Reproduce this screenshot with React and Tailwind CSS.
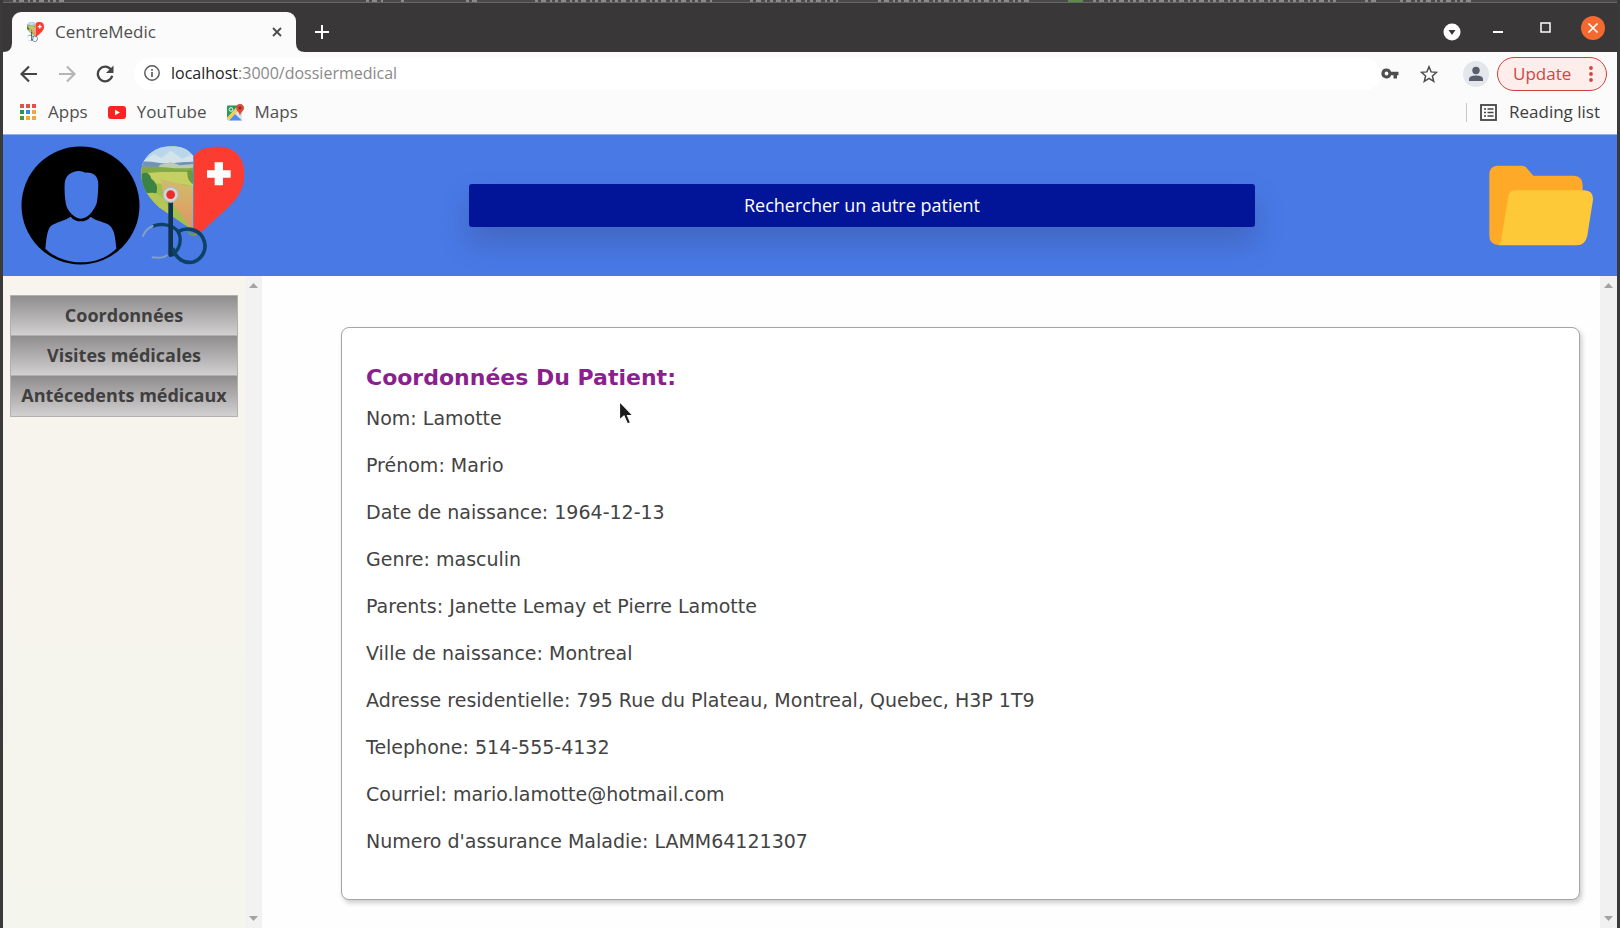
import React from "react";

const FIELDS = [
  ["Nom", "Lamotte"],
  ["Prénom", "Mario"],
  ["Date de naissance", "1964-12-13"],
  ["Genre", "masculin"],
  ["Parents", "Janette Lemay et Pierre Lamotte"],
  ["Ville de naissance", "Montreal"],
  ["Adresse residentielle", "795 Rue du Plateau, Montreal, Quebec, H3P 1T9"],
  ["Telephone", "514-555-4132"],
  ["Courriel", "mario.lamotte@hotmail.com"],
  ["Numero d'assurance Maladie", "LAMM64121307"],
];

const MENU = ["Coordonnées", "Visites médicales", "Antécedents médicaux"];

function Logo({ className, id }) {
  return (
    <svg className={className} viewBox="423 48 315 357" aria-hidden="true">
      <defs>
        <clipPath id={id}>
          <path d="M580 78C562 54 538 48 510 49C460 50 424 84 423 130C424 176 448 206 480 234L580 302Z" />
        </clipPath>
        <linearGradient id={id + "-path"} x1="0" y1="0" x2="0" y2="1">
          <stop offset="0" stopColor="#cdbd6c" />
          <stop offset="0.5" stopColor="#dca765" />
          <stop offset="1" stopColor="#d3946c" />
        </linearGradient>
      </defs>
      <g clipPath={`url(#${id})`}>
        <rect x="420" y="45" width="165" height="265" fill="#a3bf4c" />
        <rect x="420" y="45" width="165" height="62" fill="#b9d6ea" />
        <path d="M425 96L462 72L484 84L512 62L546 86L585 70V108H425Z" fill="#d3e3ea" />
        <path d="M425 96C450 90 480 104 520 100C545 94 565 98 585 94V110H425Z" fill="#6f93bd" />
        <path d="M480 104L512 96L540 106L585 102V122H470Z" fill="#bccbb4" />
        <path d="M425 112C480 104 530 122 585 112V140H425Z" fill="#83a947" />
        <path d="M425 132C480 120 540 130 585 124V172C530 150 480 166 425 158Z" fill="#c6d062" />
        <path d="M425 132Q446 120 454 146Q476 160 470 188Q445 200 425 176Z" fill="#3a8345" />
        <path d="M562 122Q585 116 585 150V164Q560 158 562 122Z" fill="#6c9a40" />
        <path d="M470 146C496 150 478 170 490 184L585 310V172C550 166 515 152 470 146Z" fill={`url(#${id}-path)`} />
        <path d="M440 190C480 180 500 215 520 262L480 240Z" fill="#b4c655" />
      </g>
      <path d="M582 78C596 55 625 50 656 50C706 50 734 84 733 134C733 180 708 210 680 236L604 306L582 312Z" fill="#fd3c31" />
      <path d="M644 97H669V121H692V143H669V166H644V143H621V121H644Z" fill="#fff" />
      <g fill="none" stroke="#0e4167" strokeLinecap="round">
        <path d="M460 288C480 280 505 284 520 292C550 310 545 350 520 374" strokeWidth="10" />
        <path d="M512 214V374" stroke="#10344f" strokeWidth="14" />
        <path d="M536 304C556 292 592 294 608 322C624 350 612 384 580 396C552 402 528 386 520 358" strokeWidth="11" />
        <path d="M458 288Q436 298 429 318M500 376Q490 386 458 382" stroke="#7fa3c0" strokeWidth="6" />
        <path d="M568 309Q576 318 588 314" stroke="#6f9a54" strokeWidth="7" />
      </g>
      <circle cx="512" cy="194" r="23" fill="#d4d6d4" stroke="#b3b9b4" strokeWidth="4" />
      <circle cx="512" cy="194" r="13" fill="#ee2b2b" />
    </svg>
  );
}

function Avatar() {
  return (
    <svg className="size-[119px] shrink-0" viewBox="63 48 357 357" aria-hidden="true">
      <circle cx="241.500" cy="226.500" r="177" fill="#000" />
      <path d="M194 160C196 136 214 124 236 123C244 123 250 126 256 128C280 126 295 140 295 162C294 182 294 200 290 220C280 246 262 266 242 266C222 264 204 244 198 224C194 202 193 180 194 160Z" fill="#4879e5" />
      <path d="M136 356C140 318 142 292 158 284C178 274 198 270 212 260C220 270 230 274 242 274C254 274 264 270 272 260C286 272 308 274 326 284C344 296 346 324 349 356C320 384 282 398 241 397C200 397 160 380 136 356Z" fill="#4879e5" />
    </svg>
  );
}

function Folder() {
  return (
    <svg className="h-[81px] w-[104px] shrink-0" viewBox="927 106 312 243" aria-hidden="true">
      <path d="M951 108H1026Q1033 108 1038 113L1060 138H1182Q1208 140 1208 166V190L1150 346H955Q928 344 928 318V132Q930 110 951 108Z" fill="#ffa928" />
      <path d="M1004 182H1214Q1240 184 1239 210L1222 318Q1216 346 1190 347H956Q964 340 965 322L985 200Q988 183 1004 182Z" fill="#fec938" />
    </svg>
  );
}

function Scrollbar({ className }) {
  return (
    <div className={`flex w-[17px] shrink-0 flex-col items-center justify-between py-[7px] ${className}`} aria-hidden="true">
      <svg className="h-[5px] w-[9px]" viewBox="0 0 9 5"><path d="M0 5L4.500 0L9 5Z" fill="#a3a3a3" /></svg>
      <svg className="h-[5px] w-[9px]" viewBox="0 0 9 5"><path d="M0 0L4.500 5L9 0Z" fill="#a3a3a3" /></svg>
    </div>
  );
}

function BackWindowEdge() {
  return (
    <div className="h-[2px] overflow-hidden bg-[#4a4a4a]" aria-hidden="true">
      <svg className="h-[2px] w-[1480px]" viewBox="0 0 1480 2">
        <path d="M10 1H65M363 1H380M398 1H404M463 1H475M532 1H710M747 1H835M875 1H1027M1090 1H1335M1362 1H1377M1397 1H1472" stroke="#8a8a8a" strokeWidth="2" strokeDasharray="3 3 5 4 2 3" />
        <path d="M1065 1H1080" stroke="#5f8a4c" strokeWidth="2" />
      </svg>
    </div>
  );
}

function AppsIcon() {
  const colors = ["#e0524a", "#e0524a", "#e0524a", "#2f8f5b", "#3f83e8", "#efa93a", "#4f9440", "#efa93a", "#efa93a"];
  return (
    <svg className="size-4" viewBox="0 0 16 16" aria-hidden="true">
      {colors.map((c, i) => (
        <rect key={i} x={(i % 3) * 6} y={Math.floor(i / 3) * 6} width="4" height="4" fill={c} />
      ))}
    </svg>
  );
}

function TitleBar() {
  return (
    <div className="flex h-[49px] items-end bg-[#3a3738] pl-[9px]">
      <div className="relative flex h-10 w-[284px] items-center rounded-t-[9px] bg-[#fbfbfb] pr-[11px] pl-[14px]">
        <svg className="absolute bottom-0 -left-[9px] size-[9px]" viewBox="0 0 9 9" aria-hidden="true"><path d="M9 0V9H0Q9 9 9 0Z" fill="#fbfbfb" /></svg>
        <svg className="absolute -right-[9px] bottom-0 size-[9px]" viewBox="0 0 9 9" aria-hidden="true"><path d="M0 0V9H9Q0 9 0 0Z" fill="#fbfbfb" /></svg>
        <Logo className="h-5 w-[19px]" id="tab-logo" />
        <span className="ml-[10px] flex-1 text-[17px] text-[#4f4f4f]">CentreMedic</span>
        <button type="button" aria-label="Fermer l'onglet" className="flex size-4 items-center justify-center">
          <svg className="size-[10px]" viewBox="0 0 10 10"><path d="M1 1L9 9M9 1L1 9" stroke="#4a4a4a" strokeWidth="1.800" /></svg>
        </button>
      </div>
      <button type="button" aria-label="Nouvel onglet" className="ml-[18px] flex h-10 w-4 items-center justify-center">
        <svg className="size-[14px]" viewBox="0 0 14 14"><path d="M7 0V14M0 7H14" stroke="#fff" strokeWidth="2" /></svg>
      </button>
      <div className="ml-auto flex h-[49px] items-center pr-3">
        <button type="button" aria-label="Rechercher dans les onglets" className="mt-2">
          <svg className="size-[18px]" viewBox="0 0 18 18"><circle cx="9" cy="9" r="8.500" fill="#fff" /><path d="M5.500 7H12.500L9 12Z" fill="#3a3738" /></svg>
        </button>
        <button type="button" aria-label="Réduire" className="ml-[32px] mt-2">
          <svg className="h-[2px] w-[10px]" viewBox="0 0 10 2"><path d="M0 1H10" stroke="#fff" strokeWidth="2" /></svg>
        </button>
        <button type="button" aria-label="Agrandir" className="ml-[37px]">
          <svg className="size-[11px]" viewBox="0 0 11 11"><rect x="1" y="1" width="9" height="9" fill="none" stroke="#fff" strokeWidth="1.500" /></svg>
        </button>
        <button type="button" aria-label="Fermer" className="ml-[30px]">
          <svg className="size-6" viewBox="0 0 24 24"><circle cx="12" cy="12" r="12" fill="#f4692f" /><path d="M7.500 7.500L16.500 16.500M16.500 7.500L7.500 16.500" stroke="#fff" strokeWidth="1.700" /></svg>
        </button>
      </div>
    </div>
  );
}

function Toolbar() {
  return (
    <div className="flex h-[43px] items-center bg-[#fbfbfb] pr-[10px] pl-[17px]">
      <button type="button" aria-label="Précédent">
        <svg className="size-[18px]" viewBox="0 0 18 18"><path d="M17 9H2M9 1.500L1.500 9L9 16.500" fill="none" stroke="#444" strokeWidth="2.200" /></svg>
      </button>
      <button type="button" aria-label="Suivant" className="ml-5">
        <svg className="size-[18px]" viewBox="0 0 18 18"><path d="M1 9H16M9 1.500L16.500 9L9 16.500" fill="none" stroke="#b5b5b5" strokeWidth="2.200" /></svg>
      </button>
      <button type="button" aria-label="Actualiser" className="ml-5">
        <svg className="size-[18px]" viewBox="0 0 18 18"><path d="M15 4.600A7.300 7.300 0 1 0 16.200 10.800" fill="none" stroke="#444" strokeWidth="2.300" /><path d="M17.500 0.500V8H10Z" fill="#444" /></svg>
      </button>
      <div className="ml-5 flex h-8 flex-1 items-center rounded-full bg-white pb-px pl-[10px]">
        <svg className="size-4" viewBox="0 0 16 16" aria-hidden="true"><circle cx="8" cy="8" r="7.200" fill="none" stroke="#5c5c5c" strokeWidth="1.500" /><path d="M8 7V12M8 4V5.700" stroke="#5c5c5c" strokeWidth="1.700" /></svg>
        <a href="#dossiermedical" className="ml-[11px] text-base text-[#898989]">
          <span className="text-[#222]">localhost</span>:3000/dossiermedical
        </a>
      </div>
      <button type="button" aria-label="Mots de passe" className="mr-[21px]">
        <svg className="h-[11px] w-[18px]" viewBox="0 0 18 11"><path d="M5.500 0.500A5 5 0 1 0 10.100 7.300H12.500V10.500H16V7.300H17.500V3.700H10.100A5 5 0 0 0 5.500 0.500ZM5.500 3.600A1.900 1.900 0 1 1 5.500 7.400A1.900 1.900 0 0 1 5.500 3.600Z" fill="#4d4d4d" fillRule="evenodd" /></svg>
      </button>
      <button type="button" aria-label="Ajouter aux favoris" className="mr-[25px]">
        <svg className="size-[18px]" viewBox="0 0 18 18"><path d="M9 1.800L11.100 6.900L16.600 7.300L12.400 10.900L13.700 16.300L9 13.400L4.300 16.300L5.600 10.900L1.400 7.300L6.900 6.900Z" fill="none" stroke="#4d4d4d" strokeWidth="1.500" /></svg>
      </button>
      <button type="button" aria-label="Profil">
        <svg className="size-[26px]" viewBox="0 0 26 26"><circle cx="13" cy="13" r="13" fill="#e3e6eb" /><circle cx="13" cy="9.500" r="3.700" fill="#585e6e" /><path d="M6 20V18Q6 14.500 13 14.500Q20 14.500 20 18V20Z" fill="#585e6e" /></svg>
      </button>
      <button type="button" className="ml-2 flex h-[34px] w-[110px] items-center rounded-full border border-[#d2403b] bg-[#fdedeb] pr-[13px] pl-[15px] text-[17px] text-[#cf4743]">
        Update
        <svg className="ml-auto h-4 w-1" viewBox="0 0 4 16" aria-hidden="true"><circle cx="2" cy="2" r="1.900" fill="#cf4743" /><circle cx="2" cy="8" r="1.900" fill="#cf4743" /><circle cx="2" cy="14" r="1.900" fill="#cf4743" /></svg>
      </button>
    </div>
  );
}

function Bookmarks() {
  return (
    <div className="flex h-10 items-center border-b border-[#8fb0f5] bg-[#fbfbfb] pr-[17px] pb-[5px] pl-[17px] text-[17px] text-[#4f4f4f]">
      <a href="#apps" className="flex items-center gap-3"><AppsIcon />Apps</a>
      <a href="#youtube" className="ml-5 flex items-center gap-[11px]">
        <svg className="h-[13px] w-[18px]" viewBox="0 0 18 13" aria-hidden="true"><rect width="18" height="13" rx="3" fill="#fb2320" /><path d="M7 3.700L12 6.500L7 9.300Z" fill="#fff" /></svg>
        YouTube
      </a>
      <a href="#maps" className="ml-5 flex items-center gap-[11px]">
        <svg className="size-[17px]" viewBox="0 0 17 17" aria-hidden="true">
          <rect y="1.500" width="15" height="15" rx="1" fill="#dfe3e6" />
          <path d="M0 2.500Q0 1.500 1 1.500H11L0 14Z" fill="#2f9a57" />
          <path d="M0 14L11 2.500L13 5L1 16.500Z" fill="#f6cd43" />
          <path d="M2 16.500L8 10L15 16.500Z" fill="#4f8df0" />
          <circle cx="4" cy="5.500" r="1.800" fill="none" stroke="#fff" strokeWidth="0.900" />
          <path d="M13 0A3.900 3.900 0 0 0 9.200 4C9.200 7 12.500 8 13 12C13.500 8 17 7 17 4A3.900 3.900 0 0 0 13 0Z" fill="#dc4a3c" />
          <circle cx="13" cy="4" r="1.400" fill="#8f2a20" />
        </svg>
        Maps
      </a>
      <a href="#reading-list" className="ml-auto flex h-[19px] items-center gap-3 border-l border-[#c9c9c9] pl-[13px] text-[#3d3d3d]">
        <svg className="size-[17px]" viewBox="0 0 17 17" aria-hidden="true"><rect x="1" y="1" width="15" height="15" fill="none" stroke="#444" strokeWidth="1.800" /><path d="M4 5H6M4 8.500H6M4 12H6M7.500 5H13.500M7.500 8.500H13.500M7.500 12H13.500" stroke="#444" strokeWidth="1.600" /></svg>
        Reading list
      </a>
    </div>
  );
}

export default function App() {
  return (
    <div className="relative flex min-h-screen flex-col border-x-3 border-[#3a3a3a] bg-white font-['Open_Sans','Noto_Sans',sans-serif]">
      <BackWindowEdge />
      <div className="h-px bg-[#666]" />
      <TitleBar />
      <Toolbar />
      <Bookmarks />
      <header className="flex h-[141px] items-center gap-px bg-[#4879e5] pr-[24px] pl-[18px]">
        <Avatar />
        <Logo className="h-[119px] w-[105px] shrink-0" id="page-logo" />
        <div className="flex-1 pr-[233px] pl-[222px]">
          <button type="button" className="h-[43px] w-full rounded-[3px] bg-[#021498] pb-[2px] text-lg text-white shadow-[0_16px_28px_rgba(50,50,93,0.25)]">
            Rechercher un autre patient
          </button>
        </div>
        <Folder />
      </header>
      <div className="flex flex-1">
        <aside className="flex bg-linear-to-b from-[#f8f4ee] to-[#f4f5ec]">
          <nav className="w-[242px] pt-[19px] pr-[7px] pl-[7px]">
            <ul className="divide-y divide-[#b0b0b0] border border-[#b0b0b0]">
              {MENU.map((m) => (
                <li key={m} className="h-10">
                  <button type="button" className="size-full bg-linear-to-b from-[#8f8d8d] to-[#d2d0d1] pb-[2px] text-lg font-bold whitespace-nowrap text-[#3f3f3f]">
                    {m}
                  </button>
                </li>
              ))}
            </ul>
          </nav>
          <Scrollbar className="bg-[#f3f2f2]" />
        </aside>
        <main className="flex-1 bg-[#fefefe] pt-[51px] pr-5 pb-[27px] pl-[79px]">
          <section className="rounded-lg border border-[#a5a5a5] bg-white px-6 pt-[33px] pb-[34px] font-['DejaVu_Sans',Verdana,sans-serif] text-[19px] text-[#434343] shadow-[2px_3px_5px_rgba(0,0,0,0.2)]">
            <h1 className="text-[22px] leading-[34px] font-bold text-[#8c1f8f]">Coordonnées Du Patient:</h1>
            {FIELDS.map(([k, v]) => (
              <p key={k} className="leading-[47px]">{k}: {v}</p>
            ))}
          </section>
        </main>
        <Scrollbar className="bg-[#f1f1f1]" />
      </div>
      <svg className="absolute top-[400px] left-[615px] h-[26px] w-4" viewBox="0 0 16 26" aria-hidden="true">
        <path d="M1.500 1.500V20L6 16L9.500 24L12.500 22.500L9.500 15.500H15Z" fill="#1c1c1c" stroke="#fff" strokeWidth="1.200" />
      </svg>
    </div>
  );
}
